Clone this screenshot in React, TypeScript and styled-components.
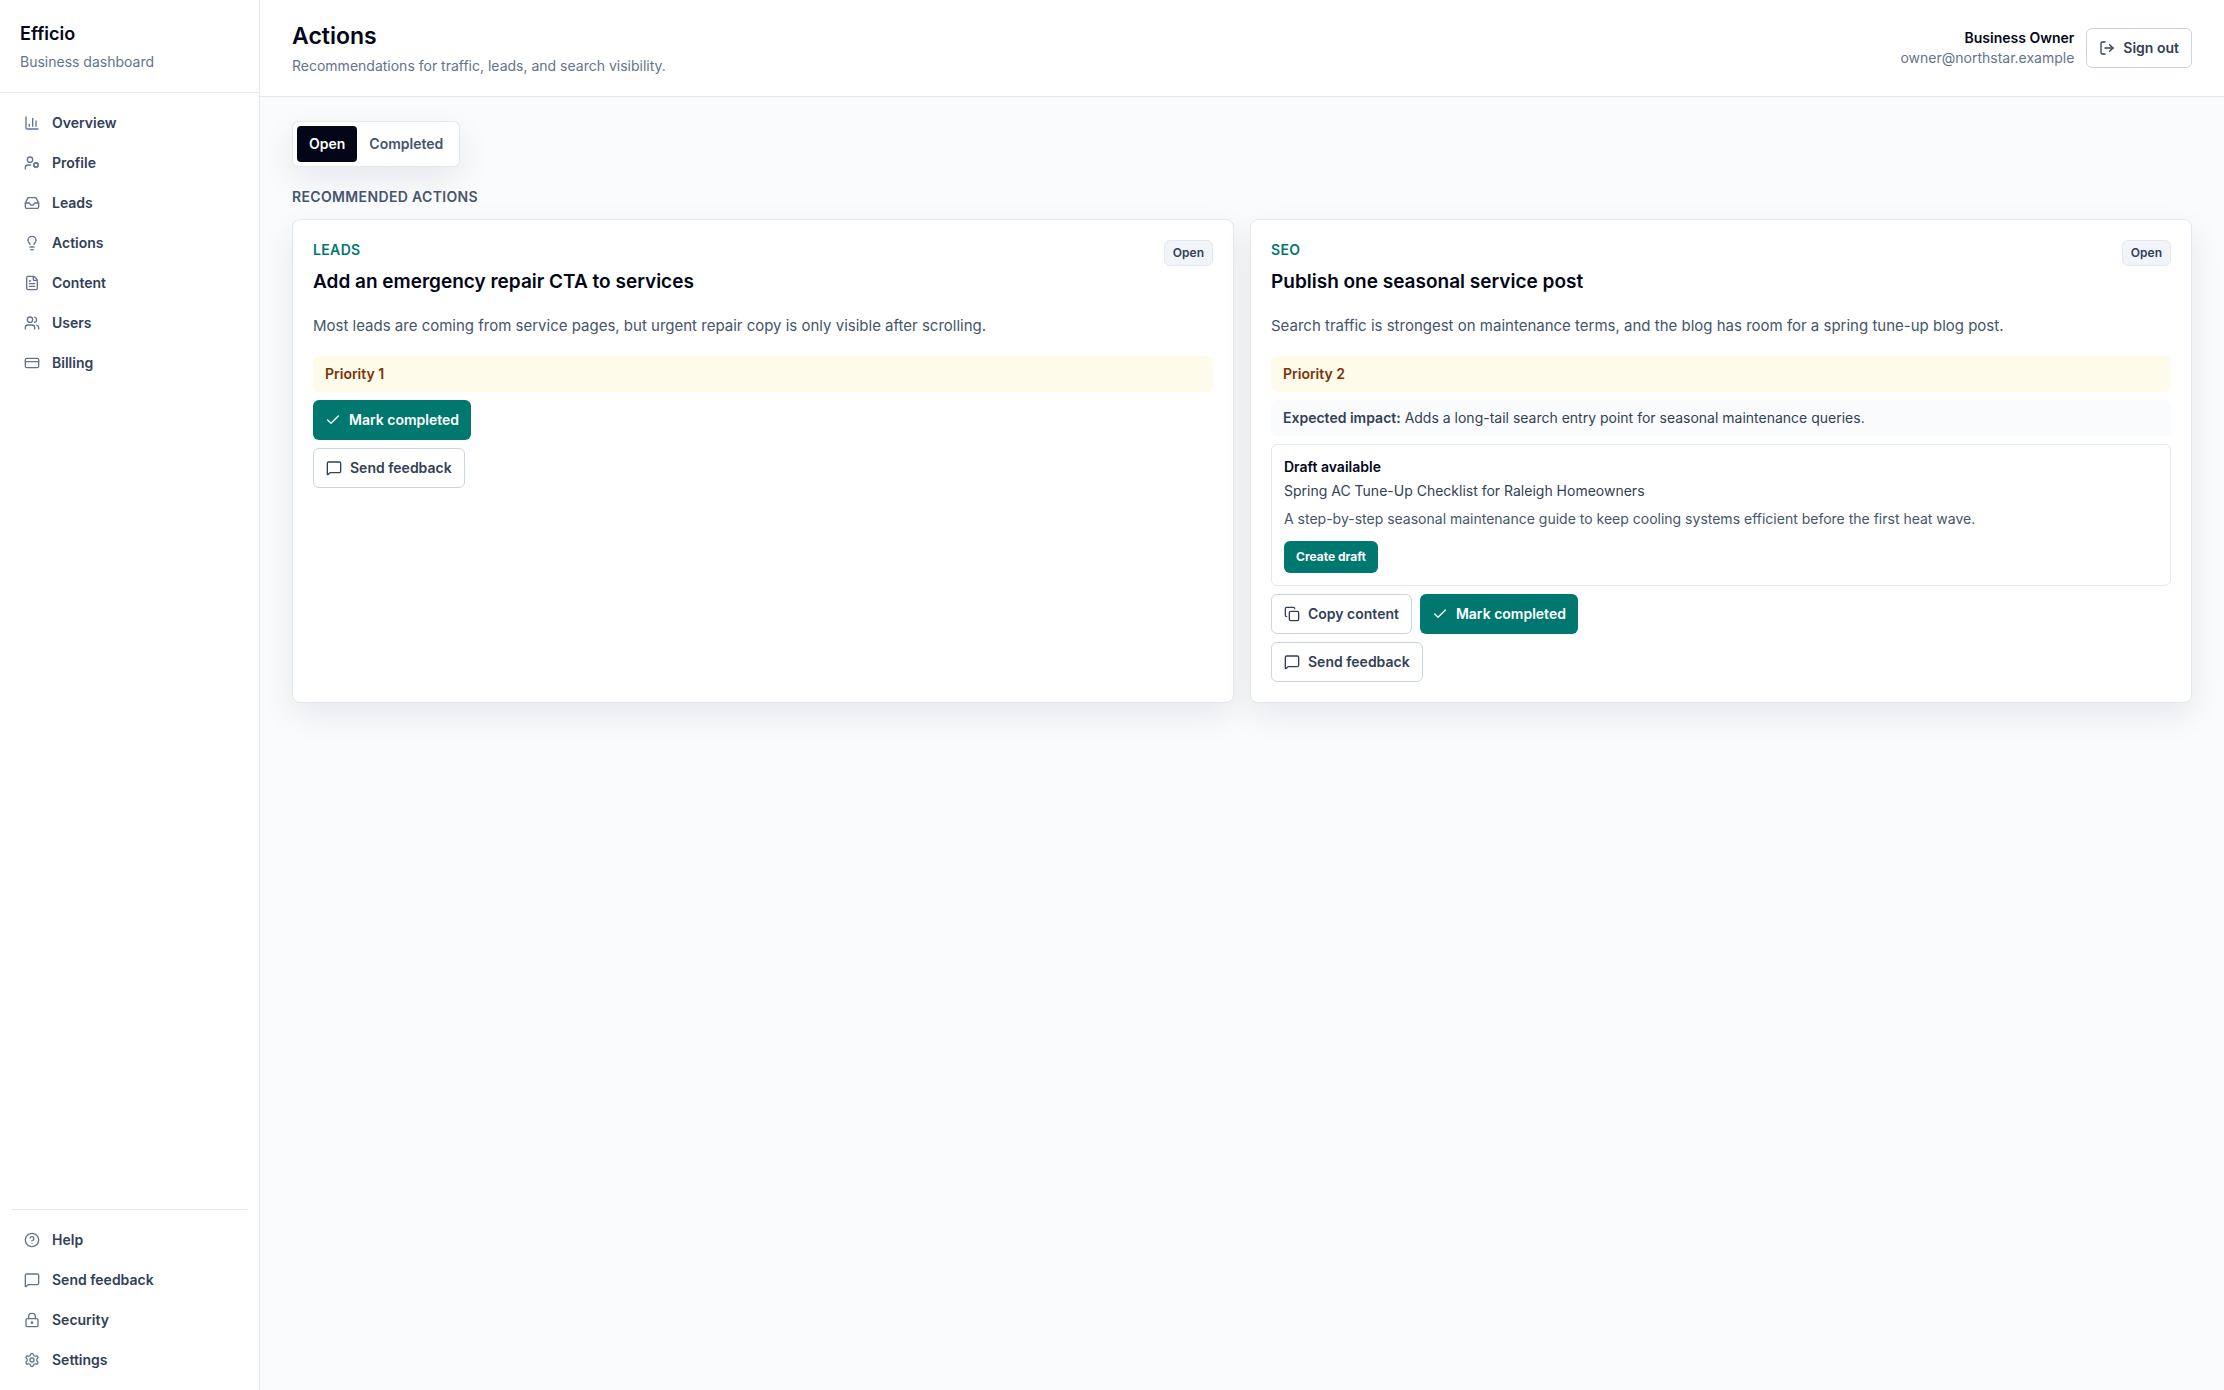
import React from "react";
import styled, { createGlobalStyle, css } from "styled-components";
import {
  ChartColumn,
  Check,
  CircleQuestionMark,
  Copy,
  CreditCard,
  FileText,
  Inbox,
  Lightbulb,
  LockKeyhole,
  LogOut,
  MessageSquare,
  Settings,
  UserCog,
  Users,
  type LucideIcon,
} from "lucide-react";

const color = {
  ink: "#020618",
  text: "#314158",
  soft: "#45556c",
  muted: "#62748e",
  line: "#e2e8f0",
  lineStrong: "#cad5e2",
  fill: "#f1f5f9",
  page: "#fafbfd",
  white: "#ffffff",
  brand: "#00786f",
  amberFill: "#fffbeb",
  amberText: "#7b3306",
};

const GlobalStyle = createGlobalStyle`
  *, *::before, *::after { box-sizing: border-box; }
  body {
    margin: 0;
    background: ${color.page};
    color: ${color.ink};
    font-family: Inter, "Liberation Sans", sans-serif;
    font-size: 14px;
    line-height: 20px;
    -webkit-font-smoothing: antialiased;
  }
  h1, h2, h3, p, ul { margin: 0; padding: 0; }
  ul { list-style: none; }
  button { font: inherit; cursor: pointer; }
`;

const Shell = styled.div`
  display: grid;
  grid-template-columns: 260px minmax(0, 1fr);
  min-height: 100vh;
`;

const Sidebar = styled.aside`
  position: sticky;
  top: 0;
  z-index: 1;
  height: 100vh;
  display: flex;
  flex-direction: column;
  background: ${color.white};
  border-right: 1px solid ${color.line};
`;

const Brand = styled.div`
  padding: 20px;
  border-bottom: 1px solid ${color.line};
`;

const BrandName = styled.p`
  font-size: 18px;
  line-height: 28px;
  font-weight: 600;
`;

const Caption = styled.p`
  margin-top: 4px;
  color: ${color.muted};
`;

const PrimaryNav = styled.nav`
  flex: 1;
  padding: 12px;
`;

const SecondaryNav = styled.nav`
  margin: 0 12px;
  padding: 12px 0;
  border-top: 1px solid ${color.line};
`;

const NavList = styled.ul`
  display: grid;
  gap: 4px;
`;

const NavLink = styled.a`
  display: flex;
  align-items: center;
  gap: 12px;
  padding: 8px 12px;
  border-radius: 6px;
  color: ${color.text};
  font-weight: 600;
  text-decoration: none;

  svg { color: ${color.muted}; }
  &:hover { background: ${color.fill}; }
`;

const Page = styled.div`
  display: flex;
  flex-direction: column;
  min-width: 0;
`;

const Header = styled.header`
  display: flex;
  align-items: center;
  justify-content: space-between;
  gap: 16px;
  padding: 20px 32px;
  background: ${color.white};
  border-bottom: 1px solid ${color.line};
`;

const PageTitle = styled.h1`
  font-size: 23px;
  line-height: 32px;
  font-weight: 600;
`;

const Account = styled.div`
  display: flex;
  align-items: center;
  gap: 12px;
  text-align: right;
`;

const AccountName = styled.p`
  font-weight: 600;
`;

const AccountEmail = styled.p`
  color: ${color.muted};
`;

const Main = styled.main`
  padding: 24px 32px;
`;

const raised = css`
  background: ${color.white};
  border: 1px solid ${color.line};
  box-shadow: 0 12px 32px rgba(2, 6, 24, 0.08);
`;

const Tabs = styled.div`
  ${raised}
  display: inline-flex;
  vertical-align: top;
  padding: 4px;
  border-radius: 6px;
`;

const Tab = styled.button<{ $active?: boolean }>`
  padding: 8px 12px;
  border: 0;
  border-radius: 4px;
  background: ${(p) => (p.$active ? color.ink : "transparent")};
  color: ${(p) => (p.$active ? color.white : color.soft)};
  font-weight: 600;
`;

const SectionTitle = styled.h2`
  margin: 20px 0 12px;
  color: ${color.soft};
  font-size: 14px;
  line-height: 20px;
  font-weight: 600;
  letter-spacing: 0.025em;
  text-transform: uppercase;
`;

const CardGrid = styled.div`
  display: grid;
  grid-template-columns: repeat(2, minmax(0, 1fr));
  gap: 16px;
`;

const Card = styled.article`
  ${raised}
  padding: 20px;
  border-radius: 8px;
`;

const CardHead = styled.div`
  display: flex;
  align-items: flex-start;
  justify-content: space-between;
  gap: 12px;
`;

const Category = styled.p`
  color: ${color.brand};
  font-weight: 600;
  letter-spacing: 0.025em;
  text-transform: uppercase;
`;

const CardTitle = styled.h3`
  margin-top: 8px;
  font-size: 19px;
  line-height: 28px;
  font-weight: 600;
`;

const Badge = styled.span`
  padding: 4px 8px;
  border: 1px solid ${color.line};
  border-radius: 6px;
  background: ${color.fill};
  color: ${color.text};
  font-size: 12px;
  line-height: 16px;
  font-weight: 600;
`;

const Summary = styled.p`
  margin: 16px 0;
  color: ${color.soft};
  font-size: 15px;
  line-height: 28px;
`;

const Stack = styled.div`
  display: grid;
  gap: 8px;
`;

const Note = styled.p<{ $tone: "amber" | "plain" }>`
  padding: 8px 12px;
  border-radius: 6px;
  ${(p) =>
    p.$tone === "amber"
      ? css`
          background: ${color.amberFill};
          color: ${color.amberText};
          font-weight: 600;
        `
      : css`
          background: ${color.page};
          color: ${color.text};
        `}

  strong { font-weight: 600; }
`;

const Draft = styled.section`
  padding: 12px;
  border: 1px solid ${color.line};
  border-radius: 6px;
`;

const DraftHeading = styled.p`
  font-weight: 600;
`;

const DraftTitle = styled.p`
  margin-top: 4px;
  color: ${color.text};
`;

const DraftText = styled.p`
  margin: 8px 0 12px;
  color: ${color.soft};
`;

const Actions = styled.div`
  display: flex;
  flex-wrap: wrap;
  gap: 8px;
`;

const Button = styled.button<{ $primary?: boolean; $small?: boolean }>`
  display: inline-flex;
  align-items: center;
  justify-content: center;
  gap: 8px;
  min-height: ${(p) => (p.$small ? "32px" : "40px")};
  padding: 0 12px;
  border: ${(p) => (p.$primary ? "0" : `1px solid ${color.lineStrong}`)};
  border-radius: 6px;
  background: ${(p) => (p.$primary ? color.brand : color.white)};
  color: ${(p) => (p.$primary ? color.white : color.text)};
  font-size: ${(p) => (p.$small ? "12px" : "14px")};
  line-height: ${(p) => (p.$small ? "16px" : "20px")};
  font-weight: ${(p) => (p.$small ? 700 : 600)};
`;

type NavEntry = { label: string; icon: LucideIcon };

const primaryNav: NavEntry[] = [
  { label: "Overview", icon: ChartColumn },
  { label: "Profile", icon: UserCog },
  { label: "Leads", icon: Inbox },
  { label: "Actions", icon: Lightbulb },
  { label: "Content", icon: FileText },
  { label: "Users", icon: Users },
  { label: "Billing", icon: CreditCard },
];

const secondaryNav: NavEntry[] = [
  { label: "Help", icon: CircleQuestionMark },
  { label: "Send feedback", icon: MessageSquare },
  { label: "Security", icon: LockKeyhole },
  { label: "Settings", icon: Settings },
];

type Recommendation = {
  category: string;
  title: string;
  summary: string;
  priority: number;
  impact?: string;
  draft?: { title: string; text: string };
};

const recommendations: Recommendation[] = [
  {
    category: "Leads",
    title: "Add an emergency repair CTA to services",
    summary:
      "Most leads are coming from service pages, but urgent repair copy is only visible after scrolling.",
    priority: 1,
  },
  {
    category: "SEO",
    title: "Publish one seasonal service post",
    summary:
      "Search traffic is strongest on maintenance terms, and the blog has room for a spring tune-up blog post.",
    priority: 2,
    impact: "Adds a long-tail search entry point for seasonal maintenance queries.",
    draft: {
      title: "Spring AC Tune-Up Checklist for Raleigh Homeowners",
      text: "A step-by-step seasonal maintenance guide to keep cooling systems efficient before the first heat wave.",
    },
  },
];

function NavItems({ items }: { items: NavEntry[] }) {
  return (
    <NavList>
      {items.map(({ label, icon: Icon }) => (
        <li key={label}>
          <NavLink href="#">
            <Icon size={16} aria-hidden />
            {label}
          </NavLink>
        </li>
      ))}
    </NavList>
  );
}

function RecommendationCard({ item }: { item: Recommendation }) {
  return (
    <Card>
      <CardHead>
        <div>
          <Category>{item.category}</Category>
          <CardTitle>{item.title}</CardTitle>
        </div>
        <Badge>Open</Badge>
      </CardHead>
      <Summary>{item.summary}</Summary>
      <Stack>
        <Note $tone="amber">Priority {item.priority}</Note>
        {item.impact && (
          <Note $tone="plain">
            <strong>Expected impact:</strong> {item.impact}
          </Note>
        )}
        {item.draft && (
          <Draft>
            <DraftHeading>Draft available</DraftHeading>
            <DraftTitle>{item.draft.title}</DraftTitle>
            <DraftText>{item.draft.text}</DraftText>
            <Button type="button" $primary $small>
              Create draft
            </Button>
          </Draft>
        )}
        <Actions>
          {item.draft && (
            <Button type="button">
              <Copy size={16} aria-hidden />
              Copy content
            </Button>
          )}
          <Button type="button" $primary>
            <Check size={16} aria-hidden />
            Mark completed
          </Button>
        </Actions>
        <Actions>
          <Button type="button">
            <MessageSquare size={16} aria-hidden />
            Send feedback
          </Button>
        </Actions>
      </Stack>
    </Card>
  );
}

export default function App() {
  return (
    <>
      <GlobalStyle />
      <Shell>
        <Sidebar>
          <Brand>
            <BrandName>Efficio</BrandName>
            <Caption>Business dashboard</Caption>
          </Brand>
          <PrimaryNav aria-label="Main">
            <NavItems items={primaryNav} />
          </PrimaryNav>
          <SecondaryNav aria-label="Support">
            <NavItems items={secondaryNav} />
          </SecondaryNav>
        </Sidebar>
        <Page>
          <Header>
            <div>
              <PageTitle>Actions</PageTitle>
              <Caption>Recommendations for traffic, leads, and search visibility.</Caption>
            </div>
            <Account>
              <div>
                <AccountName>Business Owner</AccountName>
                <AccountEmail>owner@northstar.example</AccountEmail>
              </div>
              <Button type="button">
                <LogOut size={16} aria-hidden />
                Sign out
              </Button>
            </Account>
          </Header>
          <Main>
            <Tabs role="tablist" aria-label="Action status">
              <Tab type="button" role="tab" aria-selected="true" $active>
                Open
              </Tab>
              <Tab type="button" role="tab" aria-selected="false">
                Completed
              </Tab>
            </Tabs>
            <SectionTitle>Recommended actions</SectionTitle>
            <CardGrid>
              {recommendations.map((item) => (
                <RecommendationCard key={item.title} item={item} />
              ))}
            </CardGrid>
          </Main>
        </Page>
      </Shell>
    </>
  );
}
